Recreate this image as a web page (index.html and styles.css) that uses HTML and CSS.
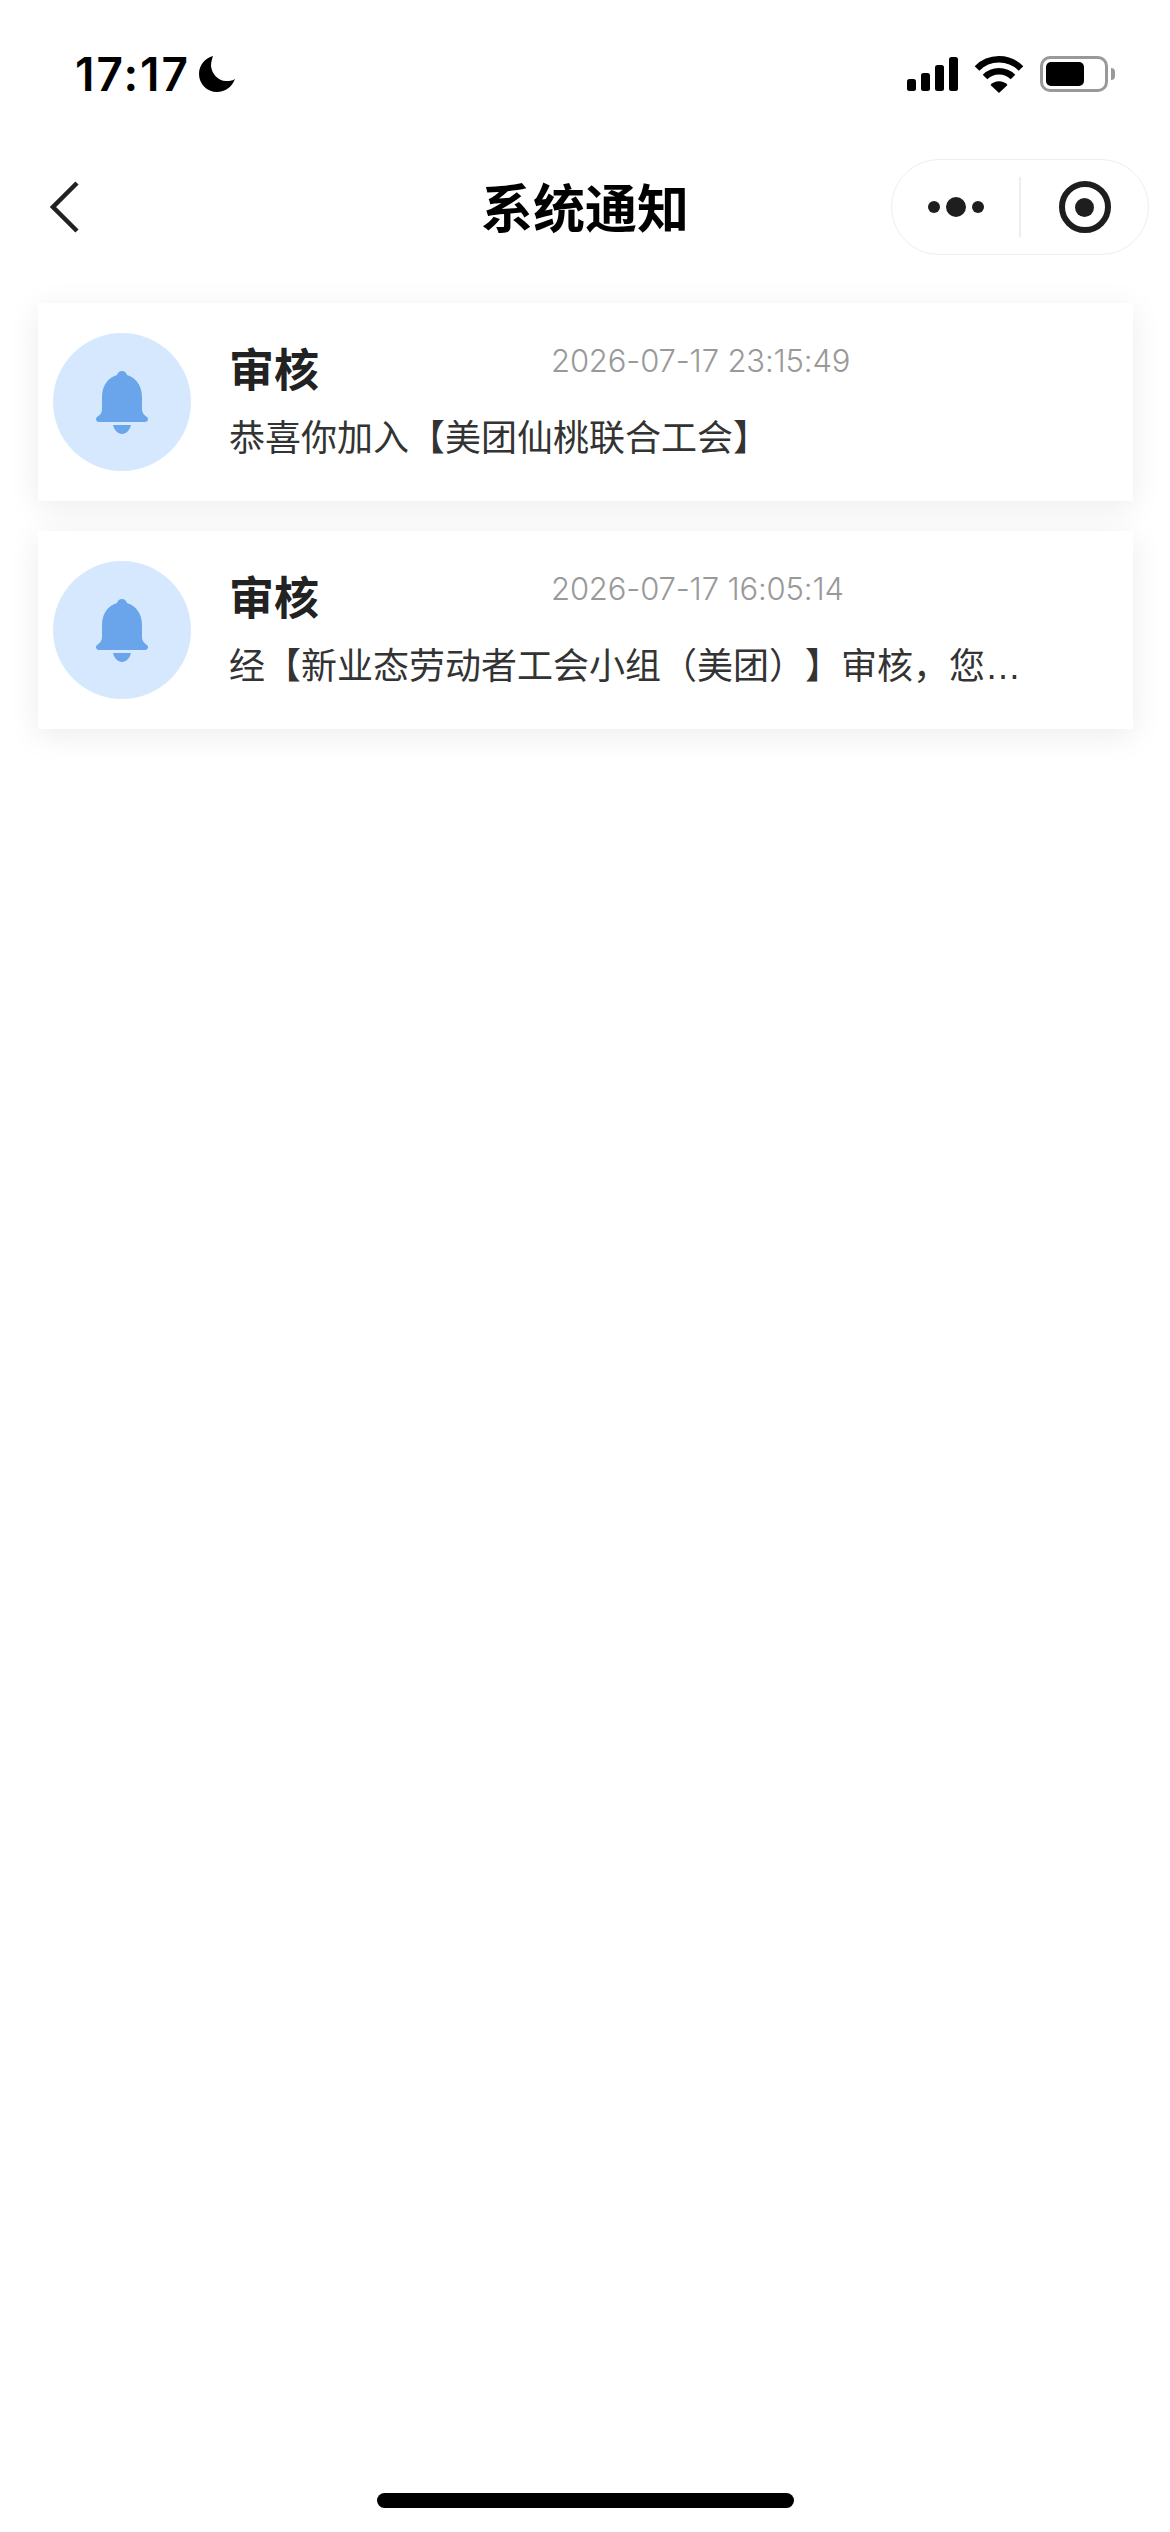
FILE: index.html
```html
<!DOCTYPE html>
<html lang="zh-CN">
<head>
    <meta charset="UTF-8">
    <meta name="viewport" content="width=device-width, initial-scale=1.0">
    <title>系统通知</title>
    <link rel="stylesheet" href="styles.css">
</head>
<body>
    <div class="page">
        <div class="status-bar">
            <div class="status-left">
                <span class="clock">17:17</span>
                <svg class="moon" viewBox="0 0 36 36"><path d="M14 0C6 2 0 9 0 18c0 10 8 18 18 18 8 0 15-5 18-13-3 2-6 2-9 2-8 0-14-7-15-15 0-4 1-7 2-10z"/></svg>
            </div>
            <div class="status-right">
                <svg class="signal" viewBox="0 0 51 34">
                    <rect x="0" y="22" width="9" height="12" rx="2.5"/>
                    <rect x="14" y="16" width="9" height="18" rx="2.5"/>
                    <rect x="28" y="8" width="9" height="26" rx="2.5"/>
                    <rect x="42" y="0" width="9" height="34" rx="2.5"/>
                </svg>
                <svg class="wifi" viewBox="0 0 50 37">
                    <path class="wifi-arc" d="M3 12.500A31 31 0 0 1 47 12.500"/>
                    <path class="wifi-arc" d="M11 21A20 20 0 0 1 39 21"/>
                    <path d="M16.500 29A11.500 11.500 0 0 1 33.500 29L25 37z"/>
                </svg>
                <div class="battery">
                    <div class="battery-body"><div class="battery-level"></div></div>
                    <div class="battery-nub"></div>
                </div>
            </div>
        </div>

        <div class="nav">
            <svg class="back" viewBox="0 0 30 54"><path d="M27 3L3 27l24 24"/></svg>
            <h1 class="nav-title">系统通知</h1>
            <div class="capsule">
                <div class="capsule-item">
                    <span class="dot"></span>
                    <span class="dot dot-big"></span>
                    <span class="dot"></span>
                </div>
                <div class="capsule-line"></div>
                <div class="capsule-item">
                    <div class="target"><div class="target-center"></div></div>
                </div>
            </div>
        </div>

        <div class="notice-list">
            <div class="notice">
                <div class="notice-icon">
                    <svg class="bell" viewBox="0 0 52 63">
                        <circle cx="26" cy="5" r="5"/>
                        <path d="M26 3C14 4 6 13 6 26v12c0 4-2 6-5 8-2 2-1 5 2 5h46c3 0 4-3 2-5-3-2-5-4-5-8V26C46 13 38 4 26 3z"/>
                        <path d="M17 54h18c-1 5-5 9-9 9s-8-4-9-9z"/>
                    </svg>
                </div>
                <div class="notice-body">
                    <div class="notice-head">
                        <span class="notice-title">审核</span>
                        <span class="notice-time">2026-07-17 23:15:49</span>
                    </div>
                    <p class="notice-text">恭喜你加入【美团仙桃联合工会】</p>
                </div>
            </div>

            <div class="notice">
                <div class="notice-icon">
                    <svg class="bell" viewBox="0 0 52 63">
                        <circle cx="26" cy="5" r="5"/>
                        <path d="M26 3C14 4 6 13 6 26v12c0 4-2 6-5 8-2 2-1 5 2 5h46c3 0 4-3 2-5-3-2-5-4-5-8V26C46 13 38 4 26 3z"/>
                        <path d="M17 54h18c-1 5-5 9-9 9s-8-4-9-9z"/>
                    </svg>
                </div>
                <div class="notice-body">
                    <div class="notice-head">
                        <span class="notice-title">审核</span>
                        <span class="notice-time">2026-07-17 16:05:14</span>
                    </div>
                    <p class="notice-text">经【新业态劳动者工会小组（美团）】审核，您…</p>
                </div>
            </div>
        </div>

        <div class="home-bar"></div>
    </div>
</body>
</html>
```

FILE: styles.css
```css
* {
    box-sizing: border-box;
}
body {
    margin: 0;
    background-color: #fff;
    font-family: "Liberation Sans", "Noto Sans CJK SC", sans-serif;
}
.page {
    display: flex;
    flex-direction: column;
    width: 1170px;
    height: 2532px;
    overflow: hidden;
}

/* status bar */
.status-bar {
    display: flex;
    justify-content: space-between;
    align-items: center;
    height: 148px;
    padding: 0 55px 0 75px;
}
.status-left {
    display: flex;
    align-items: center;
    gap: 9px;
}
.clock {
    font-family: Inter, sans-serif;
    font-size: 46px;
    font-weight: 600;
    letter-spacing: 2px;
    color: #000;
}
.moon {
    width: 36px;
    height: 36px;
}
.status-right {
    display: flex;
    align-items: center;
    gap: 16px;
}
.signal {
    width: 51px;
    height: 34px;
}
.wifi {
    width: 50px;
    height: 37px;
}
.wifi-arc {
    fill: none;
    stroke: #000;
    stroke-width: 6.500;
}
.battery {
    display: flex;
    align-items: center;
    gap: 3px;
}
.battery-body {
    width: 68px;
    height: 36px;
    padding: 3px;
    border: 3px solid #999;
    border-radius: 10px;
}
.battery-level {
    width: 38px;
    height: 100%;
    background-color: #000;
    border-radius: 5px;
}
.battery-nub {
    width: 4px;
    height: 12px;
    background-color: #999;
    border-radius: 0 4px 4px 0;
}

/* navigation */
.nav {
    display: grid;
    grid-template-columns: 1fr auto 1fr;
    align-items: center;
    height: 96px;
    margin-top: 11px;
    padding: 0 21px;
}
.back {
    width: 30px;
    height: 54px;
    margin-left: 29px;
    fill: none;
    stroke: #222;
    stroke-width: 4.500;
}
.nav-title {
    margin: -4px 0 0;
    font-size: 52px;
    font-weight: 700;
    color: #000;
}
.capsule {
    justify-self: end;
    display: flex;
    align-items: center;
    width: 258px;
    height: 96px;
    border: 1px solid #eee;
    border-radius: 48px;
}
.capsule-item {
    flex: 1;
    display: flex;
    justify-content: center;
    align-items: center;
    gap: 6px;
}
.capsule-line {
    width: 2px;
    height: 60px;
    background-color: #eee;
}
.dot {
    width: 12px;
    height: 12px;
    background-color: #1e1e1e;
    border-radius: 50%;
}
.dot-big {
    width: 20px;
    height: 20px;
}
.target {
    display: flex;
    justify-content: center;
    align-items: center;
    width: 52px;
    height: 52px;
    border: 6px solid #1e1e1e;
    border-radius: 50%;
}
.target-center {
    width: 19px;
    height: 19px;
    background-color: #1e1e1e;
    border-radius: 50%;
}

/* notice cards */
.notice-list {
    display: flex;
    flex-direction: column;
    gap: 30px;
    padding: 48px 37px 0 38px;
}
.notice {
    display: flex;
    align-items: center;
    height: 198px;
    padding-left: 15px;
    background-color: #fff;
    box-shadow: 0 6px 30px rgba(0,0,0,0.08);
}
.notice-icon {
    display: flex;
    justify-content: center;
    align-items: center;
    width: 138px;
    height: 138px;
    background-color: #d6e8fe;
    border-radius: 50%;
}
.bell {
    width: 52px;
    height: 63px;
    fill: #6aa5ec;
}
.notice-body {
    margin-left: 38px;
}
.notice-head {
    display: flex;
    align-items: flex-start;
    height: 62px;
    padding-top: 2px;
}
.notice-title {
    width: 322px;
    font-size: 45px;
    line-height: 60px;
    font-weight: 700;
    color: #222;
}
.notice-time {
    font-family: Inter, sans-serif;
    font-size: 31px;
    font-weight: 300;
    letter-spacing: -0.15px;
    line-height: 38px;
    color: #999;
}
.notice-text {
    margin: 12px 0 0;
    font-size: 36px;
    line-height: 50px;
    color: #333;
    text-spacing-trim: space-all;
}

.home-bar {
    width: 417px;
    height: 15px;
    margin: auto auto 24px;
    background-color: #000;
    border-radius: 8px;
}
```
